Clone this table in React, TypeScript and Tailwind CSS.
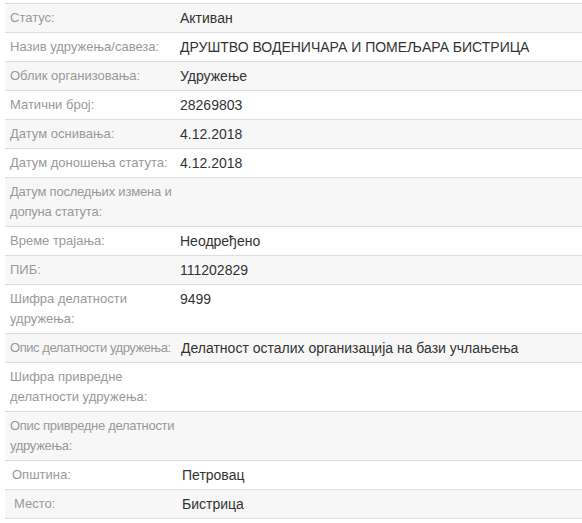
import React from 'react';

interface InfoRow {
  label: string[];
  value?: string;
  labelPad?: string;
  valuePad?: string;
  labelTrack?: string;
}

// Преломи редова у ознакама су фиксни, као на оригиналу
const ROWS: InfoRow[] = [
  { label: ['Статус:'], value: 'Активан' },
  { label: ['Назив удружења/савеза:'], value: 'ДРУШТВО ВОДЕНИЧАРА И ПОМЕЉАРА БИСТРИЦА' },
  { label: ['Облик организовања:'], value: 'Удружење' },
  { label: ['Матични број:'], value: '28269803' },
  { label: ['Датум оснивања:'], value: '4.12.2018' },
  { label: ['Датум доношења статута:'], value: '4.12.2018' },
  { label: ['Датум последњих измена и', 'допуна статута:'], labelTrack: 'tracking-[-0.2px]' },
  { label: ['Време трајања:'], value: 'Неодређено' },
  { label: ['ПИБ:'], value: '111202829' },
  { label: ['Шифра делатности', 'удружења:'], value: '9499' },
  {
    label: ['Опис делатности удружења:'],
    value: 'Делатност осталих организација на бази учлањења',
    valuePad: 'pl-[6px]',
    labelTrack: 'tracking-[-0.45px]',
  },
  { label: ['Шифра привредне', 'делатности удружења:'] },
  { label: ['Опис привредне делатности', 'удружења:'], labelTrack: 'tracking-[-0.3px]' },
  { label: ['Општина:'], value: 'Петровац', labelPad: 'pl-[7px]', valuePad: 'pl-[7px]' },
  { label: ['Место:'], value: 'Бистрица', labelPad: 'pl-[9px]', valuePad: 'pl-[7px]' },
];

export default function App() {
  return (
    <div className="w-[582px] h-[523px] bg-white overflow-hidden pt-[3px] pl-[5px] font-['Liberation_Sans',Arial,sans-serif]">
      <div className="w-[600px] border-t border-[#dddddd]">
        {ROWS.map((row, i) => (
          <div
            key={row.label.join(' ')}
            className={`grid grid-cols-[170px_1fr] border-b border-[#dddddd] ${
              i % 2 === 0 ? 'bg-[#f7f7f7]' : 'bg-white'
            }`}
          >
            <div
              className={`py-1 pr-0 text-[13px] leading-5 text-[#999999] whitespace-nowrap ${
                row.labelPad ?? 'pl-[5px]'
              } ${row.labelTrack ?? ''}`}
            >
              {row.label.map((line) => (
                <div key={line}>{line}</div>
              ))}
            </div>
            <div
              className={`py-1 text-[14px] leading-5 text-[#333333] ${
                row.valuePad ?? 'pl-[5px]'
              }`}
            >
              {row.value}
            </div>
          </div>
        ))}
      </div>
    </div>
  );
}
